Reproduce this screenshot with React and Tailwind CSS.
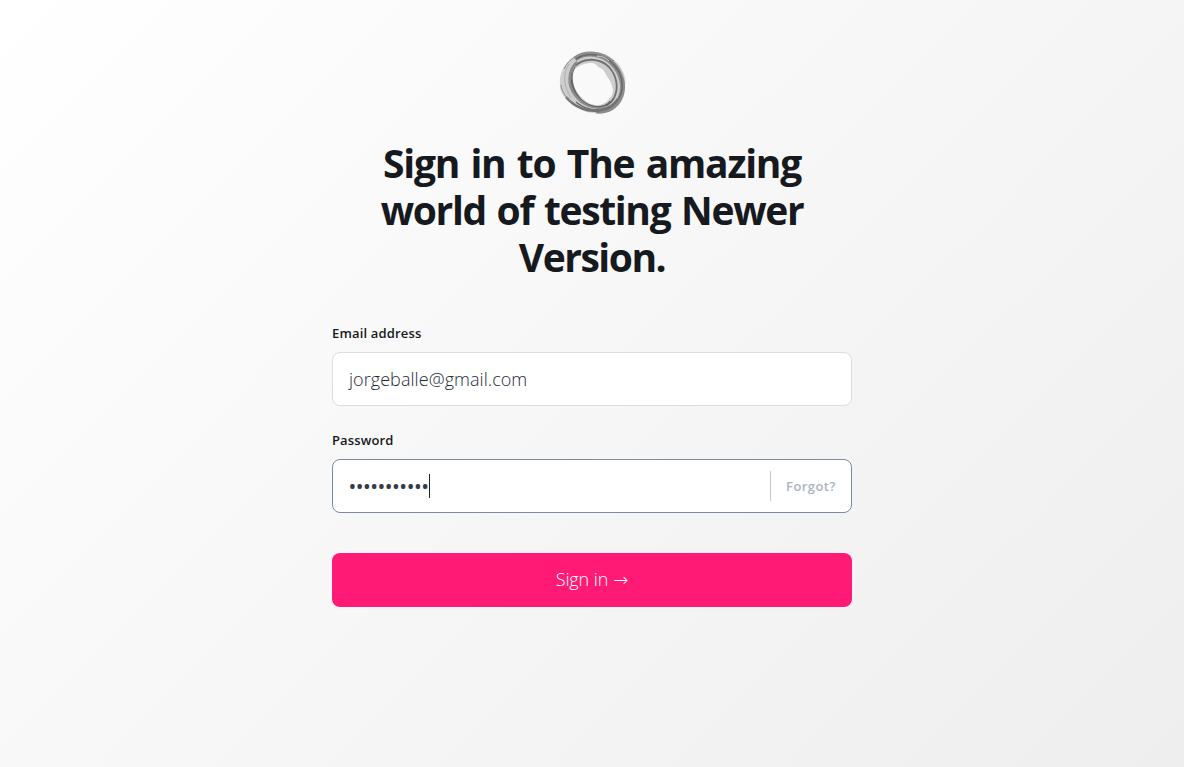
function Logo() {
  return (
    <svg className="h-[64px] w-[68px] blur-[0.35px]" viewBox="0 0 68 64" fill="none" aria-hidden="true">
      <path
        fillRule="evenodd"
        fill="#cdcdcd"
        d="M16 5C20 2 26 1 32 1c8 0 14 1 19 5 6 4 10 8 12 13 3 5 4 10 3 16-1 6-2 10-5 14-3 5-7 8-12 10-4 2-7 3-12 3-6 0-11-1-16-4-5-3-9-6-13-10C3 44 1 40 1 34 0 24 4 12 16 5ZM16 18c-3 3-3 7-2 12 1 7 4 12 9 17 5 5 10 7 15 7 5 0 9-2 12-6 3-3 4-6 4-9-1-5-2-9-5-12-3-5-4-9-8-10-3-1-4-5-8-5-7 0-12 2-17 6Z"
      />
      <path d="M16 8C27 0 43 2 53 12c9 9 13 22 9 33-4 11-14 16-25 15" stroke="#8b8b8b" strokeWidth="5" />
      <path d="M17 8C29 0 46 3 56 15c9 11 10 26 1 36-10 12-30 9-40 0" stroke="#686868" strokeWidth="1.4" />
      <path d="M16 15C25 6 41 7 50 16c8 9 10 21 5 31" stroke="#707070" strokeWidth="1.8" />
      <path d="M13 18c-4 13 3 28 14 35 10 6 22 4 28-6" stroke="#656565" strokeWidth="1.8" />
      <path d="M18 11C9 19 8 34 16 44c7 10 20 15 31 11" stroke="#8a8a8a" strokeWidth="2.5" />
      <path d="M16 16c-6 11-2 24 7 33 9 8 22 9 28 1" stroke="#606060" strokeWidth="1" />
      <path d="M7 46c8 10 22 16 35 13 7-1 13-5 17-11" stroke="#727272" strokeWidth="2.5" />
      <path d="M5 18C10 8 19 2 31 2c9 0 17 2 24 8M2 34c1 8 6 14 13 18" stroke="#929292" strokeWidth="1" />
      <path d="M10 13c-7 10-5 23 2 34" stroke="#b0b0b0" strokeWidth="1" />
      <path d="M38 5c5 0 9 2 12 5" stroke="#d8d8d8" strokeWidth="1" />
    </svg>
  );
}

export default function App() {
  return (
    <main className="flex h-[767px] justify-center bg-[linear-gradient(135deg,#ffffff_0%,#eeeeee_100%)] font-['Open_Sans','Noto_Sans',sans-serif] text-[#16191d]">
      <form className="flex w-[520px] flex-col" onSubmit={(e) => e.preventDefault()}>
        <div className="mt-[51px] flex justify-center pl-px"><Logo /></div>
        <h1 className="mt-[24px] flex flex-col items-center text-[39px] leading-[47px] font-bold whitespace-nowrap">
          <span className="tracking-[-1.25px] [word-spacing:2.5px]">Sign in to The amazing</span>
          <span className="tracking-[-1.35px] [word-spacing:2px]">world of testing Newer</span>
          <span className="tracking-[-1.5px]">Version.</span>
        </h1>
        <label className="mt-[43px] h-[20px] text-[13px] leading-[20px] font-semibold tracking-[0.17px]">Email address</label>
        <div className="mt-[9px] flex h-[54px] items-center rounded-lg border border-[#dddddf] bg-white px-4 text-[18px] text-[#242938]">
          <span className="font-light tracking-[0.05px]">jorgeballe@gmail.com</span>
        </div>
        <label className="mt-[24px] h-[20px] text-[13px] leading-[20px] font-semibold tracking-[0.12px]">Password</label>
        <div className="mt-[9px] flex h-[54px] items-center rounded-lg border border-[#7c8b9b] bg-white pl-4 text-[18px] text-[#363b4a]">
          <span className="pt-px font-semibold tracking-[0.5px]">•••••••••••</span>
          <span className="h-[24px] w-px bg-[#20242c]" />
          <span className="ml-auto flex h-[30px] w-[81px] items-center border-l border-[#c8c8ca] pt-px pl-[15px] text-[13px] font-semibold tracking-[0.45px] text-[#a9b4c1]">Forgot?</span>
        </div>
        <button className="mt-[40px] flex h-[54px] items-center justify-center gap-[5px] rounded-lg bg-[#ff1a75] pb-px text-[18px] font-light text-white">
          <span className="tracking-[-0.1px]">Sign in</span>
          <span className="font-['DejaVu_Sans',sans-serif] text-[18px]">→</span>
        </button>
      </form>
    </main>
  );
}
